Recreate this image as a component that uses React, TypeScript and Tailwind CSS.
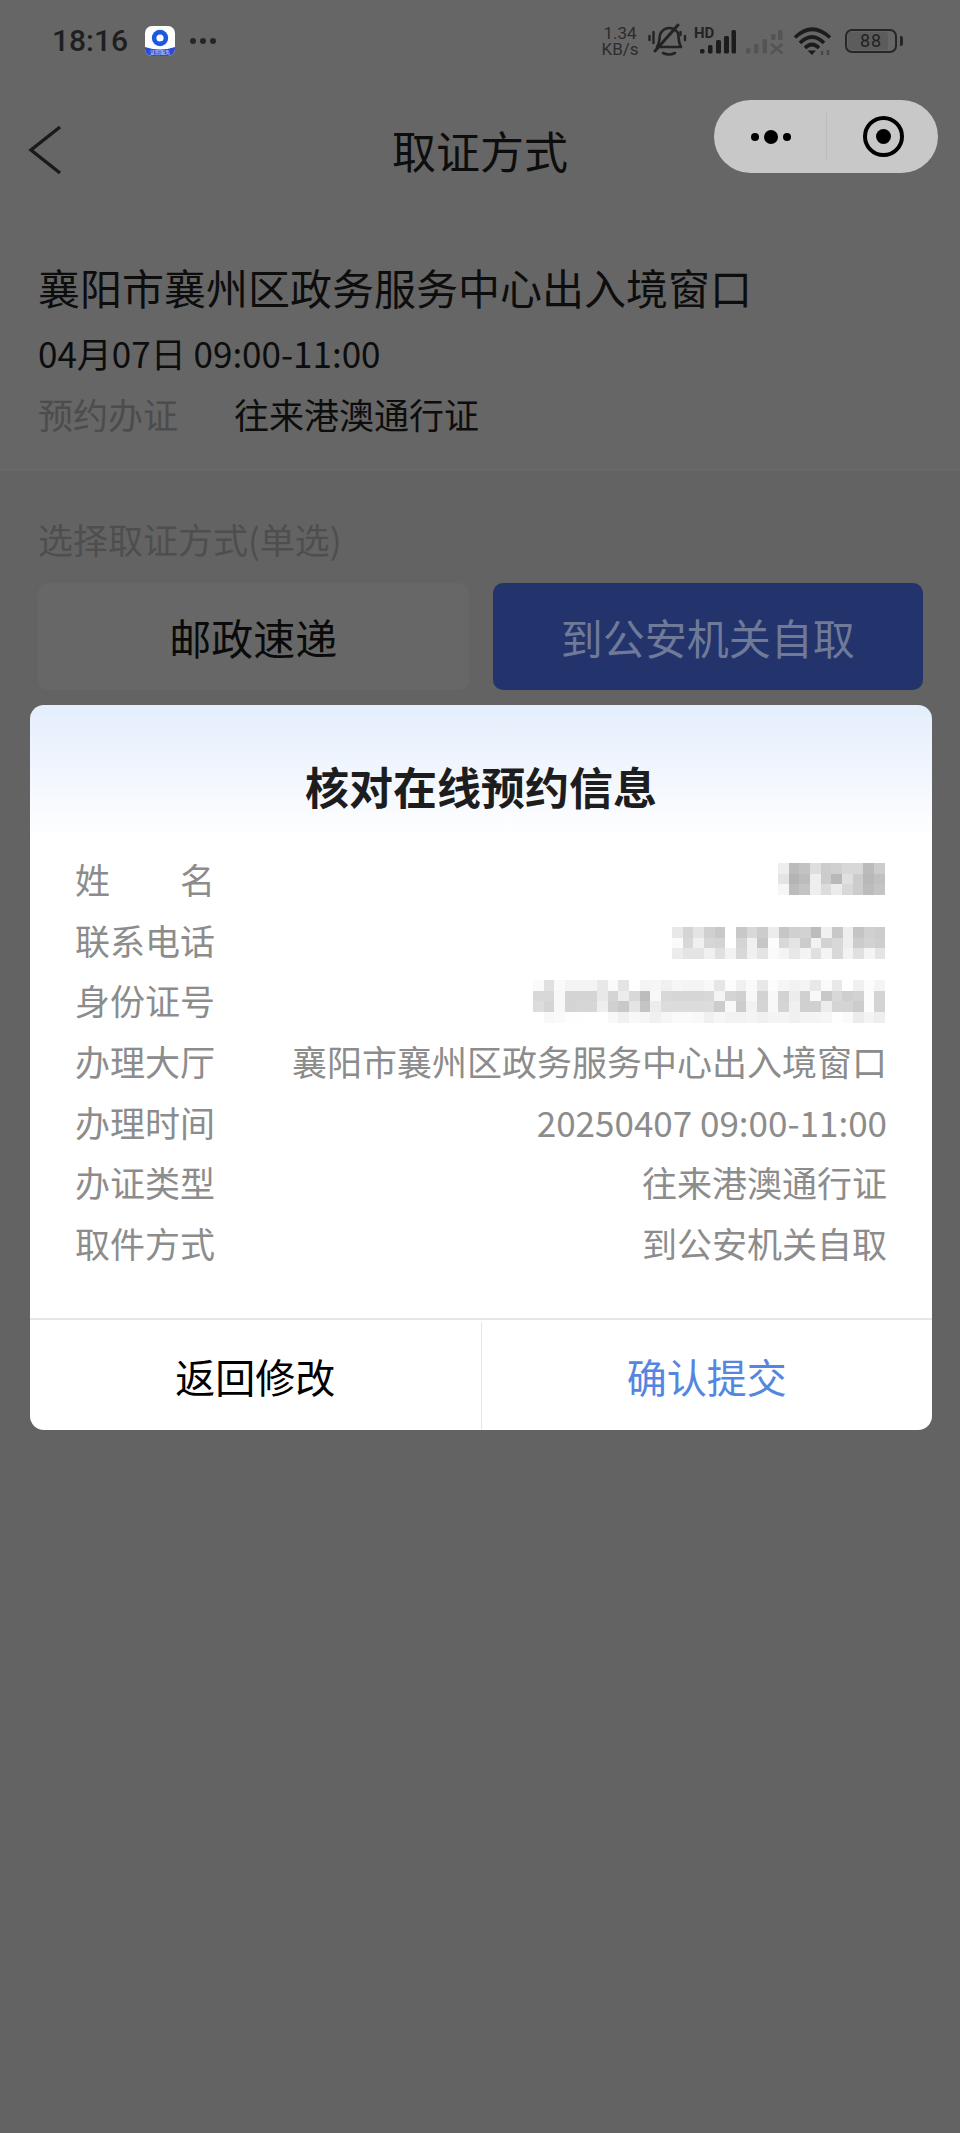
const NAME_CELLS = [
  'ee bb c2 de cc d0 d8 d8 bb cc',
  'e4 b4 bc ee cc b8 e0 cc b8 c0',
  'f6 bc c4 ee dc ec d8 cc bc c4',
]

const PHONE_CELLS = [
  'e8 d4 e4 d0 c8 ff c8 d8 cc ec c6 d0 d2 bc f0 c8 ee c4 d0 cc',
  'fa d8 f0 d6 d4 ff d4 f0 c6 fc d8 e4 cc f2 d2 d8 ee cc d2 ce',
  'ec e4 e4 f0 e0 f2 d8 f0 e4 fa f4 e8 f4 e0 f4 d8 f2 e0 f4 e4',
]

const ID_CELLS = [
  'fa e0 fa f4 f4 f4 e8 fa e4 ff f4 f6 f0 f6 f4 f4 f8 e6 fc f0 fa e8 fc f6 f2 f4 e8 fa e8 ff f0 fc f4',
  'd8 d8 f8 d4 d4 d4 e8 d4 ec d8 bc f8 d8 d6 d6 d6 d8 f4 d4 d0 f8 d2 f8 d2 ec d0 f8 c8 d8 ce d2 fc d4',
  'dc d4 f8 d4 d6 d6 ee d0 c8 e4 c4 ec dc dc dc dc dc cc f8 cc f2 d4 f8 d4 f0 d0 d0 ec d4 d4 cc fc d4',
  'ff f8 fa fe fe ff ff f8 f0 f8 f6 f0 f6 fa fa f8 f0 f6 f2 f2 f4 f0 f4 f4 f0 f4 f4 f6 fe fa ec f4 ee',
]

const CELL = 32 / 3

// 打码区块
function Mosaic({ rows }: { rows: string[] }) {
  const cols = rows[0].split(' ').length
  return (
    <svg width={cols * CELL} height={rows.length * CELL} shapeRendering="crispEdges" className="block">
      {rows.map((row, y) =>
        row.split(' ').map((c, x) => (
          <rect key={`${x}-${y}`} x={x * CELL} y={y * CELL} width={CELL + 0.5} height={CELL + 0.5} fill={`#${c}${c}${c}`} />
        )),
      )}
    </svg>
  )
}

function AppIcon() {
  return (
    <div className="relative w-[30px] h-[30px] rounded-[7px] overflow-hidden bg-white">
      <svg width="30" height="30" viewBox="0 0 30 30" className="block">
        <path d="M0 21 Q15 26 30 21 V30 H0 Z" fill="#2f49cf" />
        <circle cx="15" cy="12" r="8.2" fill="#1c59e2" />
        <circle cx="15" cy="12" r="3.6" fill="#fff" />
        <path d="M15 15.5 L19 15.5 L17.5 18.5 Z" fill="#1c59e2" />
      </svg>
      <span className="absolute left-0 right-0 bottom-[1px] text-center text-[5px] leading-[6px] text-[#dfe6ff]">证照服务</span>
    </div>
  )
}

function BellOff() {
  return (
    <svg width="42" height="36" viewBox="645 24 42 36" fill="none" stroke="#232323" strokeLinecap="round" className="block">
      <path d="M656 48 C659 44 658 40 659 36 C660 32 664 29 668 29 C672 29 675 31 677 34 C678 38 677 43 680 48 Z" strokeWidth="2.6" strokeLinejoin="round" />
      <path d="M677 26 L654 52" strokeWidth="3" />
      <path d="M662 54 Q668 57 674 54" strokeWidth="2.6" />
      <path d="M648.5 37 V41 M652.5 33 V44 M684 37 V41 M679.5 33 V36" strokeWidth="2.4" />
    </svg>
  )
}

function Signal() {
  return (
    <div className="relative w-[42px] h-[28px]">
      <span className="absolute left-0 top-[0px] text-[15px] leading-[13px] font-bold text-[#232323] font-['Roboto',sans-serif]">HD</span>
      <svg width="42" height="28" viewBox="693 26 42 28" fill="#1c1c1c" className="block">
        <rect x="699" y="48" width="4.5" height="4.5" rx="1.5" />
        <rect x="707" y="44" width="4.5" height="8.5" rx="1.5" />
        <rect x="715" y="39" width="5" height="13.5" rx="1.5" />
        <rect x="723" y="35" width="5" height="17.5" rx="1.5" />
        <rect x="730.5" y="29" width="4.5" height="23.5" rx="1.5" />
      </svg>
    </div>
  )
}

function SignalOff() {
  return (
    <svg width="38" height="28" viewBox="746 26 38 28" fill="#545454" className="block">
      <rect x="746" y="47" width="4.5" height="5.5" rx="1.5" />
      <rect x="754" y="43" width="4.5" height="9.5" rx="1.5" />
      <rect x="762.5" y="38" width="4.5" height="14.5" rx="1.5" />
      <rect x="771" y="33" width="4.5" height="6" rx="1.5" />
      <rect x="778" y="29" width="4.5" height="10" rx="1.5" />
      <path d="M771 43 L782.5 52.5 M782.5 43 L771 52.5" stroke="#545454" strokeWidth="2.6" fill="none" />
    </svg>
  )
}

function Wifi() {
  return (
    <svg width="40" height="30" viewBox="793 26 40 30" fill="none" stroke="#1c1c1c" strokeWidth="3.6" className="block">
      <path d="M795 37.5 Q812 21 830 37.5" />
      <path d="M800 43 Q812 31 824 43" />
      <path d="M805 48 Q812 41 819 48" />
      <path d="M807.5 50.5 L816 50.5 L812 55 Z" fill="#1c1c1c" stroke="none" />
      <path d="M822 55 V51 M828 55 V50" stroke="#484848" strokeWidth="2.4" />
    </svg>
  )
}

function Battery() {
  return (
    <div className="flex items-center gap-[3px]">
      <div className="relative w-[52px] h-[24px] rounded-[7px] border-[2.5px] border-[#262626] flex items-center justify-center overflow-hidden">
        <div className="absolute left-[1px] top-[1px] bottom-[1px] w-[40px] rounded-[3px] bg-[#5c5c5c]" />
        <span className="relative text-[18px] leading-none tracking-[1px] text-[#222] font-['Roboto',sans-serif]">88</span>
      </div>
      <div className="w-[3px] h-[10px] rounded-r-[2px] bg-[#262626]" />
    </div>
  )
}

const ROWS: { label: string; value?: string; cells?: string[]; offset?: string }[] = [
  { label: '姓　　名', cells: NAME_CELLS },
  { label: '联系电话', cells: PHONE_CELLS, offset: 'translate-y-[3px]' },
  { label: '身份证号', cells: ID_CELLS, offset: 'translate-y-[1px]' },
  { label: '办理大厅', value: '襄阳市襄州区政务服务中心出入境窗口' },
  { label: '办理时间', value: '20250407 09:00-11:00' },
  { label: '办证类型', value: '往来港澳通行证' },
  { label: '取件方式', value: '到公安机关自取' },
]

export default function App() {
  return (
    <div className="relative h-[2133px] overflow-hidden bg-[#636363] font-['Noto_Sans_CJK_SC','Noto_Sans',sans-serif]">
      <div className="bg-[#666666] border-b-2 border-[#696969]">
        {/* 状态栏 */}
        <div className="h-[80px] pt-[2px] pl-[52px] pr-[57px] flex items-center">
          <span className="text-[30px] leading-none font-medium text-[#1f1f1f] font-['Roboto',sans-serif] mr-[17px]">18:16</span>
          <AppIcon />
          <div className="flex gap-[4px] ml-[15px]">
            <span className="w-[6px] h-[6px] rounded-full bg-[#262626]" />
            <span className="w-[6px] h-[6px] rounded-full bg-[#262626]" />
            <span className="w-[6px] h-[6px] rounded-full bg-[#262626]" />
          </div>
          <div className="ml-auto flex items-center">
            <div className="w-[38px] text-[17px] leading-[16px] text-center text-[#2c2c2c] font-['Roboto',sans-serif] mr-[7px]">
              <div>1.34</div>
              <div>KB/s</div>
            </div>
            <BellOff />
            <div className="ml-[6px]"><Signal /></div>
            <div className="ml-[10px]"><SignalOff /></div>
            <div className="ml-[9px]"><Wifi /></div>
            <div className="ml-[12px]"><Battery /></div>
          </div>
        </div>

        {/* 导航栏 */}
        <div className="relative h-[144px] flex items-center justify-center">
          <svg width="34" height="50" viewBox="0 0 34 50" fill="none" stroke="#1a1a1a" strokeWidth="3.4" className="absolute left-[28px] top-[45px]">
            <path d="M32 2 L3 25 L32 48" />
          </svg>
          <span className="text-[44px] leading-none text-[#0d0d0d] -translate-y-[2px]">取证方式</span>
          <div className="absolute left-[714px] top-[20px] w-[224px] h-[73px] rounded-full bg-[#c8c8c8] flex items-center">
            <div className="w-[112px] pl-[2px] flex items-center justify-center gap-[5px]">
              <span className="w-[8px] h-[8px] rounded-full bg-black" />
              <span className="w-[14px] h-[14px] rounded-full bg-black" />
              <span className="w-[8px] h-[8px] rounded-full bg-black" />
            </div>
            <div className="w-px h-[47px] bg-[#bbbbbb]" />
            <div className="flex-1 pl-[2px] flex items-center justify-center">
              <div className="w-[41px] h-[41px] rounded-full border-[4px] border-black flex items-center justify-center">
                <div className="w-[15px] h-[15px] rounded-full bg-black" />
              </div>
            </div>
          </div>
        </div>

        {/* 预约信息 */}
        <div className="pl-[38px] pt-[33px] pb-[30px]">
          <div className="text-[42px] leading-[60px] text-[#0d0d0d]">襄阳市襄州区政务服务中心出入境窗口</div>
          <div className="mt-[11px] text-[35px] leading-[50px] text-[#0d0d0d]">04月07日 09:00-11:00</div>
          <div className="mt-[11px] flex text-[35px] leading-[50px]">
            <span className="w-[196px] text-[#4c4c4c]">预约办证</span>
            <span className="text-[#0d0d0d]">往来港澳通行证</span>
          </div>
        </div>
      </div>

      {/* 取证方式 */}
      <div className="pl-[38px] pr-[37px] pt-[45px]">
        <div className="text-[35px] leading-[46px] text-[#4e4e4e]">选择取证方式(单选)</div>
        <div className="mt-[21px] grid grid-cols-2 gap-[24px]">
          <div className="h-[107px] rounded-[10px] bg-[#676767] flex items-center justify-center text-[42px] text-[#0a0a0a]">邮政速递</div>
          <div className="h-[107px] rounded-[10px] bg-[#23336b] flex items-center justify-center text-[42px] text-[#6f7a99]">到公安机关自取</div>
        </div>
      </div>

      {/* 弹窗 */}
      <div className="absolute left-[30px] top-[705px] w-[902px] h-[725px] rounded-[14px] overflow-hidden bg-[linear-gradient(180deg,#e4eefc_0,#ffffff_135px)] flex flex-col">
        <div className="h-[144px] pt-[50px] text-center text-[44px] leading-[62px] font-bold text-[#1d1d1d]">核对在线预约信息</div>
        <div className="flex-1 px-[45px]">
          {ROWS.map(row => (
            <div key={row.label} className="h-[60.67px] flex items-center justify-between text-[35px] text-[#8c8c8c]">
              <span>{row.label}</span>
              {row.cells ? (
                <div className={`mr-[2px] ${row.offset || ''}`}>
                  <Mosaic rows={row.cells} />
                </div>
              ) : (
                <span>{row.value}</span>
              )}
            </div>
          ))}
        </div>
        <div className="h-[112px] pt-[2px] flex border-t-2 border-[#e6e6e6]">
          <div className="flex-1 flex items-center justify-center text-[40px] text-black border-r border-[#e6e6e6]">返回修改</div>
          <div className="flex-1 flex items-center justify-center text-[40px] text-[#5486e0]">确认提交</div>
        </div>
      </div>
    </div>
  )
}
